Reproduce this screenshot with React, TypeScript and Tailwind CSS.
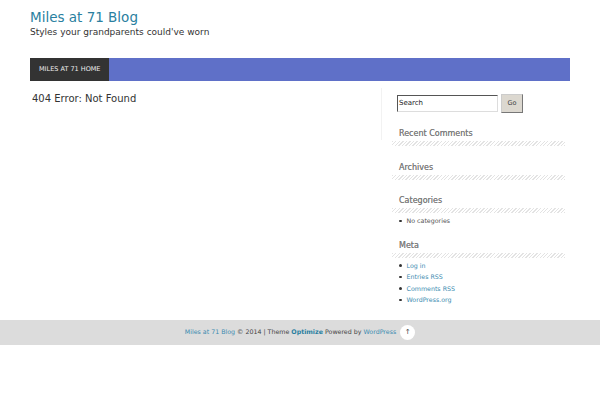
import React from "react";

const hatch =
  "bg-[repeating-linear-gradient(135deg,#e3e3e3_0px,#e3e3e3_1px,#ffffff_1px,#ffffff_2.5px)]";

function WidgetTitle({ children }: { children: React.ReactNode }) {
  return (
    <div>
      <h3 className="px-[7px] text-[8px] leading-[12px] text-[#7e7e7e] [text-shadow:0_0_0.3px_#7e7e7e]">{children}</h3>
      <div className={`mt-[1px] h-[5px] ${hatch}`} />
    </div>
  );
}

function ListItem({ children, link = true }: { children: React.ReactNode; link?: boolean }) {
  return (
    <li className="flex items-center gap-[5px] text-[6.3px] leading-[11.5px]">
      <span className="h-[2.5px] w-[2.5px] rounded-full bg-[#333]" />
      <span className={link ? "text-[#3b8bb0]" : "text-[#555]"}>{children}</span>
    </li>
  );
}

export default function App() {
  return (
    <div className="min-h-[400px] w-[600px] bg-white font-['DejaVu_Sans',sans-serif] text-[#333]">
      <div className="mx-[30px] pt-[9px]">
        <h1 className="text-[13.5px] leading-[17px] text-[#2a7fa0]">Miles at 71 Blog</h1>
        <p className="text-[9px] leading-[12px] text-[#333]">Styles your grandparents could've worn</p>
        <nav className="mt-[20px] flex h-[23px] bg-[#5f70c8]">
          <a className="flex items-center bg-[#333333] px-[9px] text-[6.5px] text-[#eeeeee]">MILES AT 71 HOME</a>
        </nav>
        <div className="flex">
          <main className="w-[351px] pt-[11px]">
            <h2 className="pl-[2px] text-[10px] leading-[14px] text-[#333]">404 Error: Not Found</h2>
          </main>
          <div className="mt-[7px] h-[52px] w-px bg-[#f2f2f2]" />
          <aside className="ml-[10px] w-[173px] pt-[14px]">
            <div className="flex items-start pl-[5px]">
              <div className="flex h-[17px] w-[101px] items-center border border-t-[#555] border-l-[#555] border-r-[#ddd] border-b-[#ddd] bg-white px-[1px] text-[7px] text-[#222]">
                Search
              </div>
              <div className="ml-[3px] -mt-[1px] flex h-[19px] w-[22px] items-center justify-center border border-r-[#777] border-b-[#777] border-t-[#ccc] border-l-[#ccc] bg-[#dcd8d0] text-[6.5px] text-[#444]">
                Go
              </div>
            </div>
            <div className="mt-[15px]">
              <WidgetTitle>Recent Comments</WidgetTitle>
            </div>
            <div className="mt-[16px]">
              <WidgetTitle>Archives</WidgetTitle>
            </div>
            <div className="mt-[15px]">
              <WidgetTitle>Categories</WidgetTitle>
              <ul className="mt-[2px] pl-[7px]">
                <ListItem link={false}>No categories</ListItem>
              </ul>
            </div>
            <div className="mt-[13px]">
              <WidgetTitle>Meta</WidgetTitle>
              <ul className="mt-[2px] pl-[7px]">
                <ListItem>Log in</ListItem>
                <ListItem>Entries RSS</ListItem>
                <ListItem>Comments RSS</ListItem>
                <ListItem>WordPress.org</ListItem>
              </ul>
            </div>
          </aside>
        </div>
      </div>
      <footer className="mt-[14px] flex h-[25px] items-center justify-center bg-[#dcdcdc] text-[6.3px] text-[#444]">
        <span className="text-[#3b8bb0]">Miles at 71 Blog</span>
        <span>&nbsp;© 2014 | Theme&nbsp;</span>
        <span className="font-bold text-[#2a7fa0]">Optimize</span>
        <span>&nbsp;Powered by&nbsp;</span>
        <span className="text-[#3b8bb0]">WordPress</span>
        <span className="ml-[4px] flex h-[15px] w-[15px] items-center justify-center rounded-full bg-white text-[7px] text-[#444]">↑</span>
      </footer>
    </div>
  );
}
